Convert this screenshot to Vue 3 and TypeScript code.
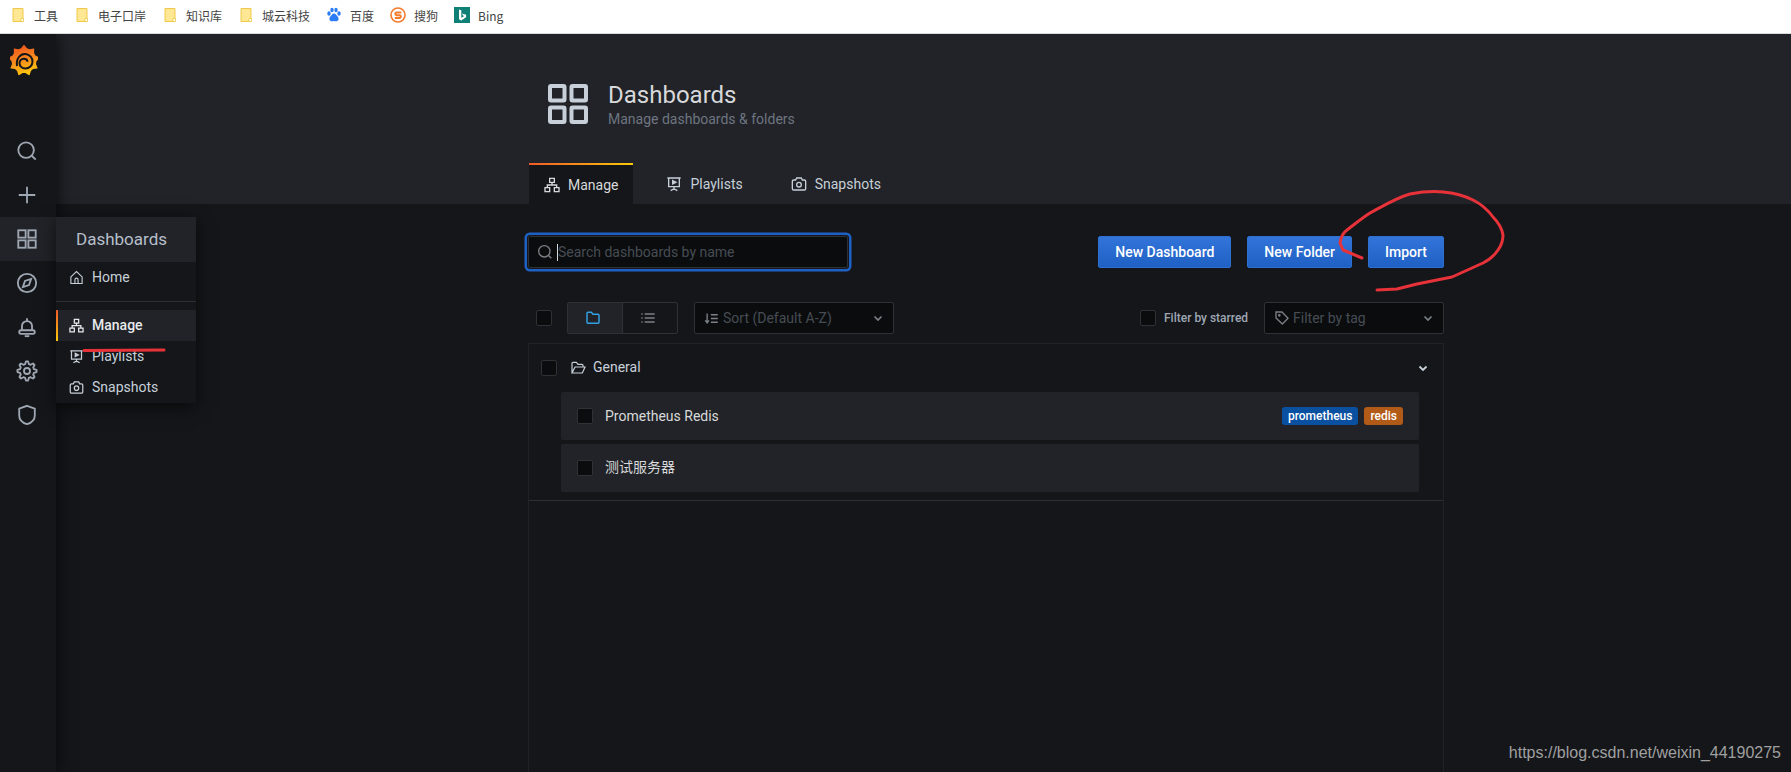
<script setup lang="ts">
const bookmarks = [
  { label: '工具', kind: 'file' },
  { label: '电子口岸', kind: 'file' },
  { label: '知识库', kind: 'file' },
  { label: '城云科技', kind: 'file' },
  { label: '百度', kind: 'baidu' },
  { label: '搜狗', kind: 'sogou' },
  { label: 'Bing', kind: 'bing' }
]
const railIcons = ['search', 'plus', 'apps', 'compass', 'bell', 'cog', 'shield']
const tabs = [
  { label: 'Manage', icon: 'sitemap', active: true },
  { label: 'Playlists', icon: 'presentation', active: false },
  { label: 'Snapshots', icon: 'camera', active: false }
]

function toothed(cx: number, cy: number, teeth: number, outer: number, inner: number, start: number, flat: number): string {
  const pts: string[] = []
  const step = (Math.PI * 2) / teeth
  for (let i = 0; i < teeth; i++) {
    const a = start + i * step
    const seq: [number, number][] = [
      [a - step * 0.34, inner],
      [a - step * flat, outer],
      [a + step * flat, outer],
      [a + step * 0.34, inner]
    ]
    for (const [ang, r] of seq) {
      pts.push(`${(cx + Math.cos(ang) * r).toFixed(2)} ${(cy + Math.sin(ang) * r).toFixed(2)}`)
    }
  }
  return 'M' + pts.join('L') + 'Z'
}
const logoPath = toothed(14, 15.5, 9, 15.5, 12.5, -Math.PI / 2, 0.03)
const gearPath = toothed(12, 12, 8, 10.5, 7.8, -Math.PI / 2, 0.14)
</script>

<template>
  <div class="app">
    <div class="bookmarks">
      <div v-for="b in bookmarks" :key="b.label" class="bookmark">
        <svg v-if="b.kind === 'file'" class="bm-icon" viewBox="0 0 16 16">
          <path d="M3 1.500h10v13H3z" fill="#ffe794" stroke="#f0c94a" stroke-width="1" />
          <path d="M11 11.500h2.500v3H11z" fill="#fff" stroke="#f0c94a" stroke-width="0.8" />
        </svg>
        <svg v-else-if="b.kind === 'baidu'" class="bm-icon" viewBox="0 0 16 16" fill="#2b7cf5">
          <ellipse cx="3" cy="6.500" rx="1.700" ry="2.200" />
          <ellipse cx="6" cy="3" rx="1.700" ry="2.300" />
          <ellipse cx="10" cy="3" rx="1.700" ry="2.300" />
          <ellipse cx="13" cy="6.500" rx="1.700" ry="2.200" />
          <path d="M8 6.500c2 0 2.400 2 3.600 3 1.400 1.200 1.400 4.500-1.100 4.800-1 .1-1.700-.3-2.500-.3s-1.500.4-2.500.3C3 14 3 10.700 4.400 9.500 5.600 8.500 6 6.500 8 6.500z" />
        </svg>
        <svg v-else-if="b.kind === 'sogou'" class="bm-icon" viewBox="0 0 16 16">
          <circle cx="8" cy="8" r="7" fill="none" stroke="#f47a2b" stroke-width="1.600" />
          <path d="M11.300 5.400H6.700a1.400 1.400 0 0 0 0 2.800h2.800a1.400 1.400 0 0 1 0 2.800H4.800" fill="none" stroke="#f47a2b" stroke-width="2" />
        </svg>
        <svg v-else class="bm-icon" viewBox="0 0 16 16">
          <rect width="16" height="16" fill="#0e8076" />
          <path d="M5 2.500l2.300.8v7.500l3-1.700-1.400-.7-.8-2 4 1.400v2.400L7.300 13.500 5 12.200z" fill="#fff" />
        </svg>
        <span>{{ b.label }}</span>
      </div>
    </div>

    <div class="shell">
      <nav class="rail">
        <svg class="logo" viewBox="0 0 28 31">
          <defs>
            <linearGradient id="grafanaGrad" x1="0.1" y1="0" x2="0.4" y2="1">
              <stop offset="0" stop-color="#ee4d1d" />
              <stop offset="0.55" stop-color="#f68a1f" />
              <stop offset="1" stop-color="#fbc50d" />
            </linearGradient>
          </defs>
          <path :d="logoPath" fill="url(#grafanaGrad)" />
          <path d="M7 21C5.800 13.500 10.500 8.500 15.500 9c4.500.4 7 4 7 7.500 0 4-3.200 7-7.200 7-3.400 0-5.800-2.500-5.800-5.300 0-2.600 2-4.500 4.400-4.500 2 0 3.500 1.400 3.500 3.100" fill="none" stroke="#141619" stroke-width="2" />
        </svg>
        <div class="rail-items">
          <div v-for="icon in railIcons" :key="icon" class="rail-item" :class="{ on: icon === 'apps' }">
            <svg class="rail-icon" viewBox="0 0 24 24" fill="none" stroke="currentColor" stroke-width="2">
              <template v-if="icon === 'search'">
                <circle cx="11" cy="11" r="8.500" />
                <path d="M17.200 17.200L21.500 21.500" />
              </template>
              <path v-else-if="icon === 'plus'" d="M12 3v18M3 12h18" />
              <template v-else-if="icon === 'apps'">
                <rect x="2.500" y="2.500" width="8" height="8" />
                <rect x="13.500" y="2.500" width="8" height="8" />
                <rect x="2.500" y="13.500" width="8" height="8" />
                <rect x="13.500" y="13.500" width="8" height="8" />
              </template>
              <template v-else-if="icon === 'compass'">
                <circle cx="12" cy="12" r="10" />
                <path d="M16.500 7.500l-2.300 6.700-6.700 2.300 2.300-6.700z" />
              </template>
              <template v-else-if="icon === 'bell'">
                <path d="M6.500 15.500V11a5.500 5.500 0 0 1 11 0v4.500M12 2.500v3" />
                <rect x="3.500" y="15.500" width="17" height="4" rx="2" />
                <path d="M9.500 22h5" />
              </template>
              <template v-else-if="icon === 'cog'">
                <circle cx="12" cy="12" r="3.300" />
                <path :d="gearPath" stroke-linejoin="round" />
              </template>
              <path v-else d="M12 2l8.500 3v7.500c0 4.500-3.500 8-8.500 9.500-5-1.500-8.500-5-8.500-9.500V5z" />
            </svg>
          </div>
        </div>
      </nav>

      <div class="menu">
        <div class="menu-head">Dashboards</div>
        <div class="menu-row">
          <svg class="i14" viewBox="0 0 24 24" fill="none" stroke="currentColor" stroke-width="1.800">
            <path d="M3 11l9-8.500 9 8.500v10.500H3zM9.500 21.500v-6a2.500 2.500 0 0 1 5 0v6" />
          </svg>
          <span>Home</span>
        </div>
        <div class="menu-sep"></div>
        <div class="menu-row active">
          <svg class="i14" viewBox="0 0 24 24" fill="none" stroke="currentColor" stroke-width="2">
            <path d="M8.500 2h7v6h-7zM1.500 16h7v6h-7zM15.500 16h7v6h-7zM12 8v4M5 16v-4h14v4" />
          </svg>
          <span>Manage</span>
        </div>
        <div class="menu-row">
          <svg class="i14" viewBox="0 0 24 24" fill="none" stroke="currentColor" stroke-width="2">
            <path d="M2 3h20M4 3v13h16V3M12 16v5M7 22l5-3 5 3" />
            <path d="M10 7l5 2.500-5 2.500z" fill="currentColor" />
          </svg>
          <span>Playlists</span>
        </div>
        <div class="menu-row">
          <svg class="i14" viewBox="0 0 24 24" fill="none" stroke="currentColor" stroke-width="2">
            <path d="M2 8a2 2 0 0 1 2-2h3l1.500-3h7L17 6h3a2 2 0 0 1 2 2v11a2 2 0 0 1-2 2H4a2 2 0 0 1-2-2z" />
            <circle cx="12" cy="13" r="3.500" />
          </svg>
          <span>Snapshots</span>
        </div>
      </div>

      <main class="main">
        <header class="band">
          <div class="wrap">
            <div class="page-head">
              <svg class="page-icon" viewBox="0 0 40 40" fill="none" stroke="#c7d0d9" stroke-width="4">
                <rect x="2" y="2" width="14.500" height="14.500" rx="1" />
                <rect x="23.500" y="2" width="14.500" height="14.500" rx="1" />
                <rect x="2" y="23.500" width="14.500" height="14.500" rx="1" />
                <rect x="23.500" y="23.500" width="14.500" height="14.500" rx="1" />
              </svg>
              <div>
                <h1 class="title">Dashboards</h1>
                <div class="subtitle">Manage dashboards &amp; folders</div>
              </div>
            </div>
            <div class="tabs">
              <div v-for="t in tabs" :key="t.label" class="tab" :class="{ active: t.active }">
                <svg class="i16" viewBox="0 0 24 24" fill="none" stroke="currentColor" stroke-width="2">
                  <path v-if="t.icon === 'sitemap'" d="M8.500 2h7v6h-7zM1.500 16h7v6h-7zM15.500 16h7v6h-7zM12 8v4M5 16v-4h14v4" />
                  <template v-else-if="t.icon === 'presentation'">
                    <path d="M2 3h20M4 3v13h16V3M12 16v5M7 22l5-3 5 3" />
                    <path d="M10 7l5 2.500-5 2.500z" fill="currentColor" />
                  </template>
                  <template v-else>
                    <path d="M2 8a2 2 0 0 1 2-2h3l1.500-3h7L17 6h3a2 2 0 0 1 2 2v11a2 2 0 0 1-2 2H4a2 2 0 0 1-2-2z" />
                    <circle cx="12" cy="13" r="3.500" />
                  </template>
                </svg>
                <span>{{ t.label }}</span>
              </div>
            </div>
          </div>
        </header>

        <section class="wrap content">
          <div class="actions">
            <div class="search">
              <svg class="i16 dim" viewBox="0 0 24 24" fill="none" stroke="currentColor" stroke-width="2">
                <circle cx="11" cy="11" r="8.500" />
                <path d="M17.200 17.200L21.500 21.500" />
              </svg>
              <span class="caret"></span>
              <span class="placeholder">Search dashboards by name</span>
            </div>
            <div class="buttons">
              <button class="btn">New Dashboard</button>
              <button class="btn">New Folder</button>
              <button class="btn">Import</button>
            </div>
          </div>

          <div class="filters">
            <div class="left-filters">
              <span class="check"></span>
              <div class="toggle">
                <span class="toggle-cell on">
                  <svg class="i16" viewBox="0 0 24 24" fill="none" stroke="#33a2e5" stroke-width="2.200">
                    <path d="M3 5a1.500 1.500 0 0 1 1.500-1.500h5l2.500 3h7.500A1.500 1.500 0 0 1 21 8v10.500a1.500 1.500 0 0 1-1.500 1.500h-15A1.500 1.500 0 0 1 3 18.500z" />
                  </svg>
                </span>
                <span class="toggle-cell">
                  <svg class="i16 list" viewBox="0 0 24 24" fill="none" stroke="currentColor" stroke-width="2">
                    <path d="M7 6h15M7 12h15M7 18h15M2 6h2M2 12h2M2 18h2" />
                  </svg>
                </span>
              </div>
              <div class="select sort">
                <svg class="i14 list" viewBox="0 0 24 24" fill="none" stroke="currentColor" stroke-width="2.200">
                  <path d="M5 4v15M2 15l3 4 3-4M11 6h11M11 12h11M11 18h11" />
                </svg>
                <span class="select-text">Sort (Default A-Z)</span>
                <svg class="chev" viewBox="0 0 12 12" fill="none" stroke="currentColor" stroke-width="1.700">
                  <path d="M2.500 4.500L6 8l3.500-3.500" />
                </svg>
              </div>
            </div>
            <div class="right-filters">
              <span class="check"></span>
              <span class="starred">Filter by starred</span>
              <div class="select tag">
                <svg class="i16 dim" viewBox="0 0 24 24" fill="none" stroke="currentColor" stroke-width="2">
                  <path d="M3 3h9l9 9.500-8.500 8.500L3 12z" />
                  <circle cx="8" cy="8" r="1" />
                </svg>
                <span class="select-text">Filter by tag</span>
                <svg class="chev" viewBox="0 0 12 12" fill="none" stroke="currentColor" stroke-width="1.700">
                  <path d="M2.500 4.500L6 8l3.500-3.500" />
                </svg>
              </div>
            </div>
          </div>

          <div class="panel">
            <div class="folder-row">
              <span class="check"></span>
              <svg class="i16 folder" viewBox="0 0 24 24" fill="none" stroke="currentColor" stroke-width="1.800">
                <path d="M3 19.500V5a1.500 1.500 0 0 1 1.500-1.500h5l2.500 3h6A1.500 1.500 0 0 1 19.500 8v2.500M3 19.500h15.500l4-9H7.500z" />
              </svg>
              <span class="folder-name">General</span>
              <svg class="chev light" viewBox="0 0 12 12" fill="none" stroke="currentColor" stroke-width="1.900">
                <path d="M2.500 4.500L6 8l3.500-3.500" />
              </svg>
            </div>
            <div class="items">
              <div class="item">
                <span class="check"></span>
                <span class="item-name">Prometheus Redis</span>
                <span class="tags">
                  <span class="pill blue">prometheus</span>
                  <span class="pill orange">redis</span>
                </span>
              </div>
              <div class="item">
                <span class="check"></span>
                <span class="item-name cjk">测试服务器</span>
              </div>
            </div>
            <div class="panel-sep"></div>
          </div>
        </section>
      </main>
    </div>

    <svg class="ink" width="1791" height="772" viewBox="0 0 1791 772" fill="none" stroke="#e8323a" stroke-width="3" stroke-linecap="round" stroke-linejoin="round">
      <path d="M84 350.500L164 350" />
      <path d="M1362 258L1343 250L1340 243C1341 236 1344 232 1347 230C1355 224 1362 218 1370 213C1383 206 1396 198 1410 194C1421 192 1432 191 1443 192C1454 193 1463 195 1473 200C1481 204 1488 210 1493 217C1499 223 1502 229 1503 235C1503 241 1501 246 1498 250C1494 256 1489 260 1483 263L1452 277L1417 284L1397 289L1377 290" />
    </svg>
    <div class="watermark">https://blog.csdn.net/weixin_44190275</div>
  </div>
</template>

<style scoped>
.app {
  position: relative;
  width: 1791px;
  height: 772px;
  overflow: hidden;
  background: #141619;
  font-family: Roboto, "Noto Sans CJK SC", sans-serif;
  font-size: 14px;
  color: #c7d0d9;
}
.bookmarks {
  position: relative;
  z-index: 4;
  height: 33px;
  box-sizing: content-box;
  background: #fff;
  border-bottom: 1px solid #d9d9d9;
  display: flex;
  align-items: center;
  padding-left: 10px;
  gap: 16px;
}
.bookmark {
  display: flex;
  align-items: center;
  gap: 8px;
  font-size: 12px;
  color: #444;
  font-family: "Noto Sans CJK SC", "Noto Sans", sans-serif;
  margin-top: -3px;
}
.bm-icon {
  width: 16px;
  height: 16px;
  flex: none;
}
.shell {
  display: flex;
  height: 738px;
  position: relative;
}
.rail {
  width: 56px;
  flex: none;
  background: #141619;
  box-shadow: 3px 0 14px rgba(0, 0, 0, 0.55);
  display: flex;
  flex-direction: column;
  align-items: stretch;
  position: relative;
  z-index: 2;
}
.logo {
  width: 28px;
  height: 31px;
  margin: 11px 0 0 10px;
  display: block;
}
.rail-items {
  margin-top: 53px;
  display: flex;
  flex-direction: column;
}
.rail-item {
  height: 44px;
  display: flex;
  align-items: center;
  justify-content: center;
  padding-right: 2px;
  color: #9fa7b3;
}
.rail-item.on {
  background: #212328;
}
.rail-icon {
  width: 22px;
  height: 22px;
}
.menu {
  position: absolute;
  left: 56px;
  top: 183px;
  width: 140px;
  background: #141619;
  box-shadow: 0 4px 16px rgba(0, 0, 0, 0.6);
  z-index: 3;
}
.menu-head {
  height: 45px;
  box-sizing: border-box;
  padding: 0 0 2px 20px;
  background: #212328;
  display: flex;
  align-items: center;
  font-size: 17px;
  color: #b7bfca;
}
.menu-row {
  height: 31px;
  box-sizing: border-box;
  display: flex;
  align-items: center;
  gap: 8px;
  padding: 0 0 1px 13px;
  font-size: 14px;
  color: #c7d0d9;
}
.menu-row.active {
  background: #212328;
  color: #e8eaed;
  font-weight: 500;
  position: relative;
}
.menu-row.active::before {
  content: "";
  position: absolute;
  left: 0;
  top: 0;
  bottom: 0;
  width: 2px;
  background: linear-gradient(#f05a28, #fbca0a);
}
.menu-sep {
  height: 1px;
  background: #2c2f35;
  margin: 8px 0;
}
.i14 {
  width: 15px;
  height: 15px;
  flex: none;
}
.i16 {
  width: 16px;
  height: 16px;
  flex: none;
}
.main {
  flex: 1;
  min-width: 0;
}
.band {
  height: 170px;
  background: #212328;
}
.wrap {
  margin-left: 472px;
  width: 916px;
}
.page-head {
  display: flex;
  align-items: center;
  padding: 47px 0 0 20px;
  gap: 20px;
}
.page-icon {
  width: 40px;
  height: 40px;
  flex: none;
}
.title {
  margin: 0 0 2px;
  font-size: 24px;
  line-height: 28px;
  font-weight: 400;
  color: #d8d9da;
}
.subtitle {
  font-size: 14px;
  line-height: 16px;
  color: #6e7580;
}
.tabs {
  display: flex;
  margin-top: 36px;
  padding-left: 1px;
}
.tab {
  height: 41px;
  padding: 0 15px;
  display: flex;
  align-items: center;
  gap: 8px;
  margin-right: 17px;
  color: #c7d0d9;
  box-sizing: border-box;
  font-size: 14px;
}
.tab:nth-child(2) {
  margin-right: 18px;
}
.tab.active {
  background: #141619;
  color: #d8d9da;
  border-top: 2px solid;
  border-image: linear-gradient(90deg, #f05a28, #fbca0a) 1;
  margin-right: 18px;
}
.content {
  padding-top: 32px;
}
.actions {
  display: flex;
  justify-content: space-between;
  height: 32px;
}
.search {
  width: 320px;
  height: 32px;
  box-sizing: border-box;
  background: #0b0c0e;
  border: 1px solid #2c3235;
  border-radius: 2px;
  box-shadow: 0 0 0 1px #141619, 0 0 0 3.500px #1f60c4;
  display: flex;
  align-items: center;
  padding-left: 8px;
  color: #7b8087;
}
.caret {
  width: 1px;
  height: 17px;
  background: #d8d9da;
  margin-left: 4px;
}
.placeholder {
  color: #464c54;
  font-size: 14px;
}
.buttons {
  display: flex;
  gap: 16px;
}
.btn {
  height: 32px;
  padding: 0 16px;
  border: 1px solid #2f6fd0;
  border-radius: 2px;
  background: linear-gradient(#3274d9, #1f60c4);
  color: #fff;
  font-family: inherit;
  font-size: 14px;
  font-weight: 500;
}
.filters {
  display: flex;
  justify-content: space-between;
  align-items: center;
  margin-top: 34px;
  height: 32px;
}
.left-filters,
.right-filters {
  display: flex;
  align-items: center;
}
.left-filters {
  padding-left: 8px;
}
.check {
  width: 16px;
  height: 16px;
  flex: none;
  display: block;
  box-sizing: border-box;
  background: #0b0c0e;
  border: 1px solid #2c3235;
  border-radius: 2px;
}
.toggle {
  display: flex;
  margin-left: 15px;
  width: 111px;
  height: 32px;
  box-sizing: border-box;
  border: 1px solid #2c3235;
  border-radius: 2px;
}
.toggle-cell {
  flex: 1;
  display: flex;
  align-items: center;
  justify-content: center;
  padding-right: 4px;
  color: #9fa7b3;
}
.toggle-cell.on {
  background: #212328;
  border-right: 1px solid #2c3235;
}
.list {
  color: #7b8087;
}
.select {
  height: 32px;
  box-sizing: border-box;
  background: #0b0c0e;
  border: 1px solid #2c3235;
  border-radius: 2px;
  display: flex;
  align-items: center;
  padding: 0 9px;
  gap: 4px;
}
.select-text {
  flex: 1;
  color: #464c54;
  font-size: 14px;
}
.sort {
  width: 200px;
  margin-left: 16px;
}
.tag {
  width: 180px;
  margin-left: 8px;
  gap: 3px;
}
.chev {
  width: 12px;
  height: 12px;
  color: #7b8087;
  flex: none;
}
.chev.light {
  color: #c7d0d9;
  margin-left: auto;
}
.starred {
  margin-left: 8px;
  font-size: 12px;
  font-weight: 500;
  color: #9fa7b3;
  width: 92px;
  white-space: nowrap;
}
.dim {
  color: #7b8087;
}
.panel {
  margin-top: 9px;
  height: 440px;
  box-sizing: border-box;
  border: 1px solid #202226;
  border-bottom: 0;
}
.folder-row {
  height: 48px;
  box-sizing: border-box;
  display: flex;
  align-items: center;
  padding: 0 14px 0 12px;
}
.folder {
  margin-left: 13px;
}
.folder-name {
  margin: 0 0 2px 7px;
  font-size: 14px;
  color: #c7d0d9;
}
.items {
  display: flex;
  flex-direction: column;
  gap: 4px;
  padding: 0 24px 0 32px;
}
.item {
  height: 48px;
  background: #212328;
  border-radius: 2px;
  display: flex;
  align-items: center;
  padding: 0 16px;
}
.item-name {
  margin-left: 12px;
  font-size: 14px;
  color: #d8d9da;
}
.cjk {
  margin-bottom: 4px;
}
.tags {
  margin-left: auto;
  display: flex;
  gap: 6px;
}
.pill {
  height: 18px;
  line-height: 18px;
  padding: 0 6px;
  border-radius: 3px;
  font-size: 12px;
  font-weight: 500;
  color: #fff;
}
.blue {
  background: #0a50a1;
}
.orange {
  background: #b25a17;
}
.panel-sep {
  height: 1px;
  background: #2c2f35;
  margin-top: 8px;
}
.ink {
  position: absolute;
  left: 0;
  top: 0;
  z-index: 5;
  pointer-events: none;
}
.watermark {
  position: absolute;
  right: 10px;
  bottom: 10px;
  z-index: 5;
  font-family: "Liberation Sans", sans-serif;
  font-size: 16px;
  color: #a0a0a0;
}
</style>
